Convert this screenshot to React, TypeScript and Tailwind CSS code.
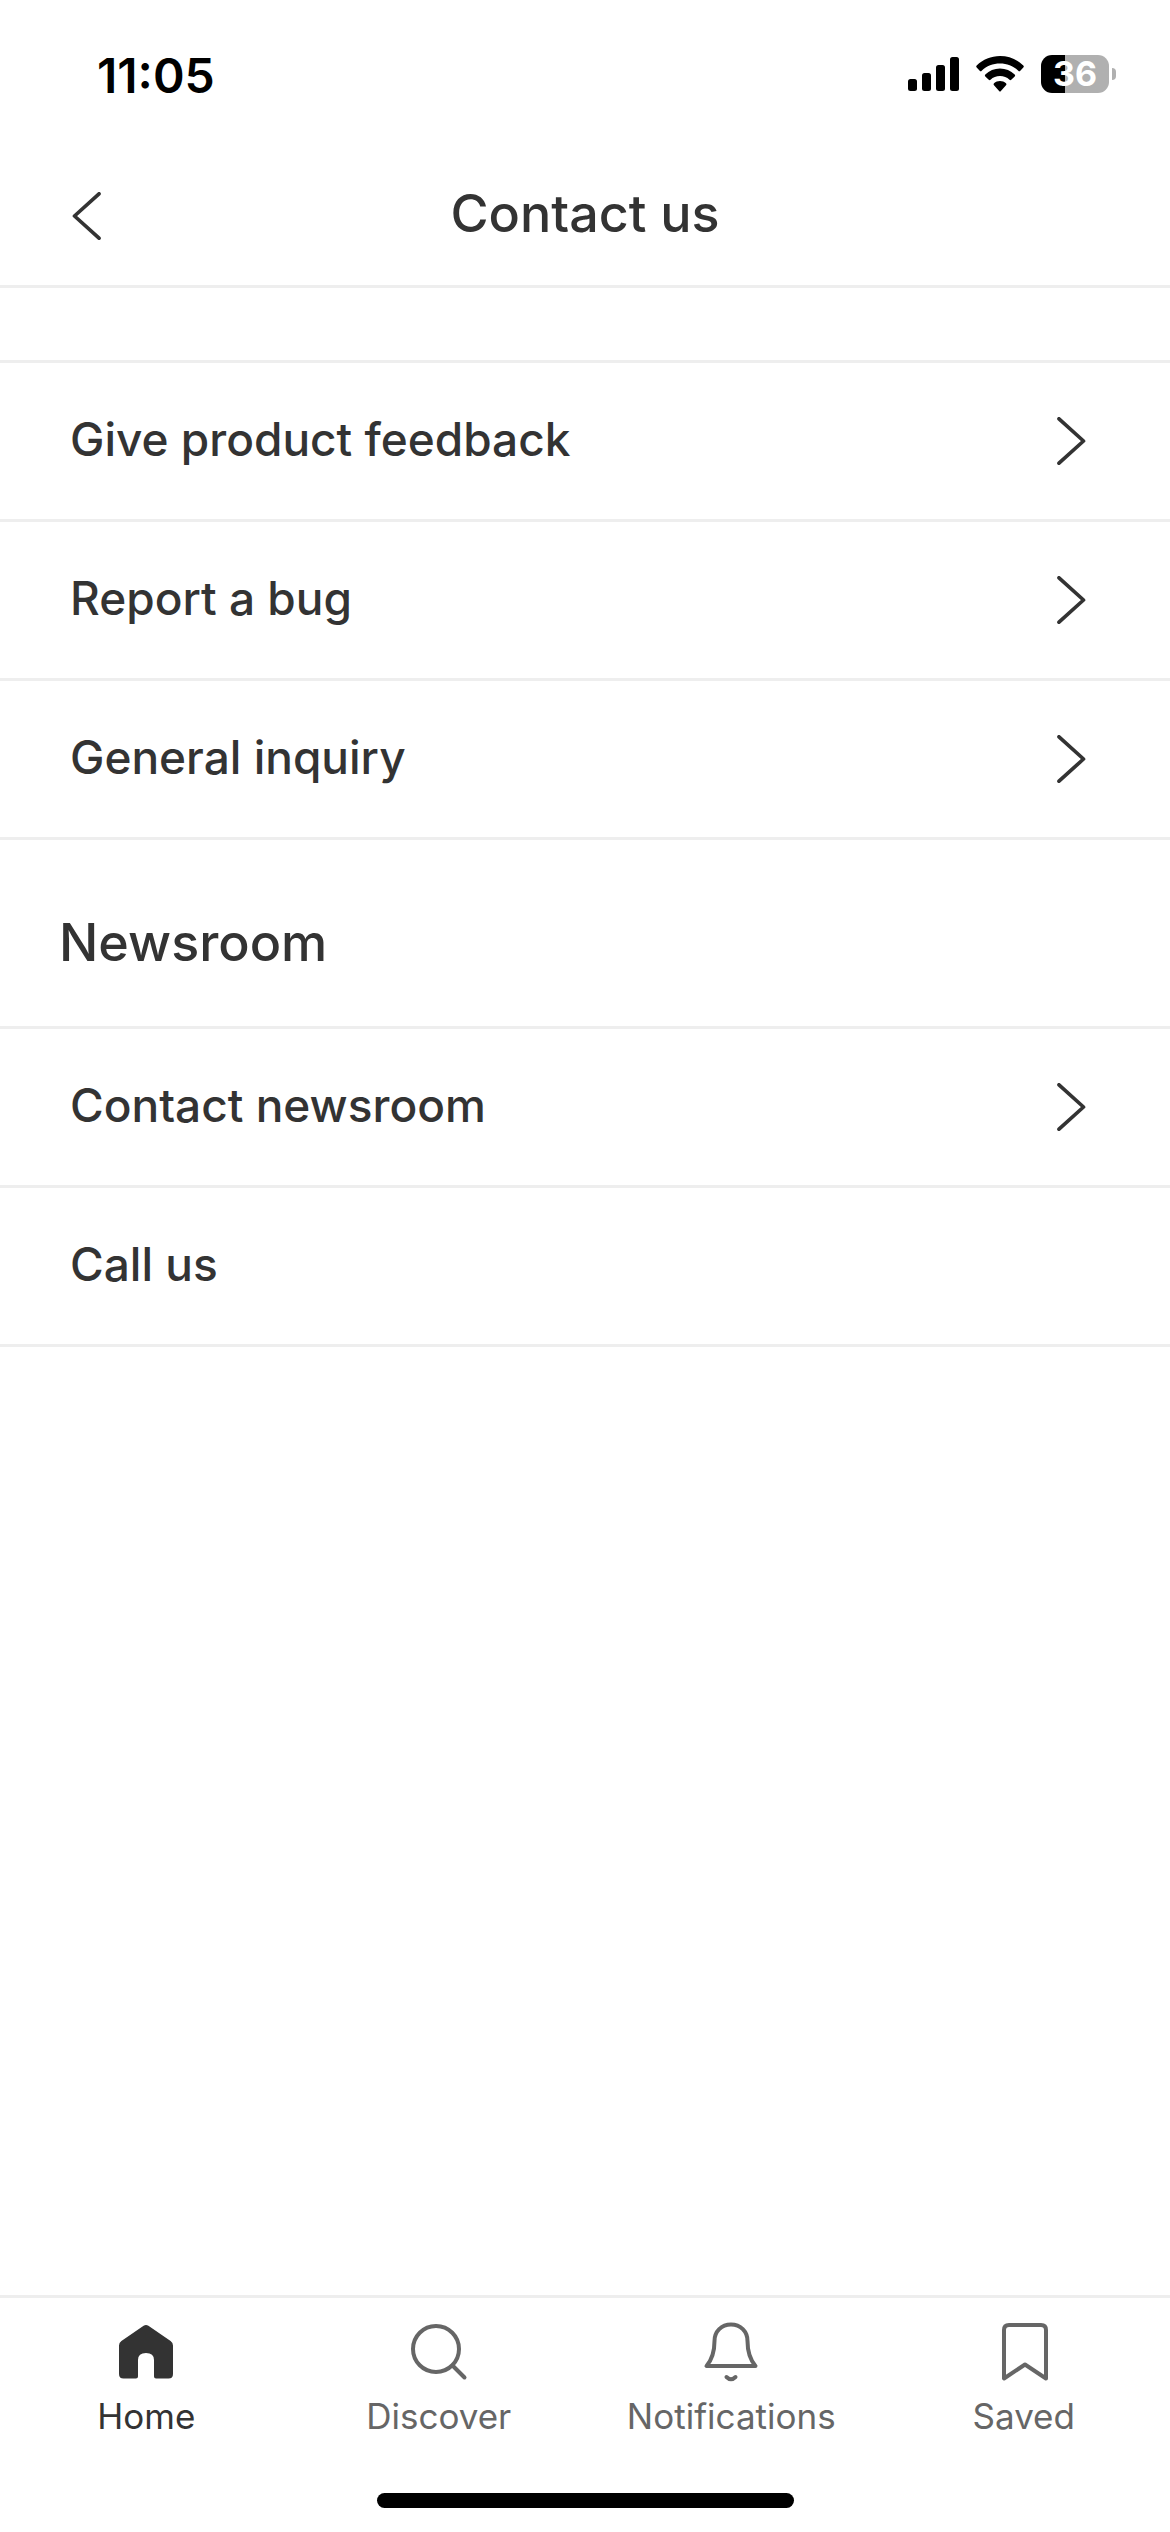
import React from 'react'
import clsx from 'clsx'

interface ContactItem {
  label: string
  hasChevron: boolean
}

interface TabItem {
  label: string
  icon: React.ReactNode
  active?: boolean
}

const supportItems: ContactItem[] = [
  { label: 'Give product feedback', hasChevron: true },
  { label: 'Report a bug', hasChevron: true },
  { label: 'General inquiry', hasChevron: true },
]

const newsroomItems: ContactItem[] = [
  { label: 'Contact newsroom', hasChevron: true },
  { label: 'Call us', hasChevron: false },
]

const tabs: TabItem[] = [
  {
    label: 'Home',
    active: true,
    icon: (
      <path
        d="M33.6 9.8Q36 8.2 38.4 9.8L60.6 25Q63 26.7 63 29.5V58Q63 62.5 58.5 62.5H46Q44 62.5 44 60.5V44Q44 37 36 37T28 44V60.5Q28 62.5 26 62.5H13.5Q9 62.5 9 58V29.5Q9 26.7 11.4 25Z"
        fill="currentColor"
        stroke="none"
      />
    ),
  },
  {
    label: 'Discover',
    icon: (
      <>
        <circle cx="33" cy="33" r="23" />
        <path d="M49.5 49.5L61.5 61.5" />
      </>
    ),
  },
  {
    label: 'Notifications',
    icon: (
      <>
        <path d="M36 8.5C26.5 8.5 19.5 15.5 19.5 25C19.5 36 17.5 43 11.5 50H60.5C54.5 43 52.5 36 52.5 25C52.5 15.5 45.5 8.5 36 8.5Z" />
        <path d="M31.5 61Q36 65.5 40.5 61" />
      </>
    ),
  },
  {
    label: 'Saved',
    icon: <path d="M16 62.5V14Q16 9 21 9H53Q58 9 58 14V62.5L37 48.5Z" />,
  },
]

function StatusBar() {
  return (
    <div className="flex h-[147px] items-center justify-between pr-[54px] pl-[97px] text-black">
      <span className="pt-1 text-[48px] leading-none font-semibold">11:05</span>
      <div className="flex items-center gap-[17px]">
        {/* Signal */}
        <svg className="h-[34px] w-[51px]" viewBox="0 0 51 34" fill="currentColor">
          <rect x="0" y="22" width="9" height="12" rx="2.5" />
          <rect x="14" y="16" width="9" height="18" rx="2.5" />
          <rect x="28" y="8" width="9" height="26" rx="2.5" />
          <rect x="42" y="0" width="9" height="34" rx="2.5" />
        </svg>
        {/* Wifi */}
        <svg className="h-9 w-12" viewBox="0 0 48 36" fill="currentColor">
          <path d="M24 0C33 0 41 3.4 47.3 9.5Q48.3 10.5 47.3 11.5L44.3 14.7Q43.3 15.7 42.3 14.7C37.3 10 31 7.5 24 7.5S10.7 10 5.7 14.7Q4.7 15.7 3.7 14.7L.7 11.5Q-.3 10.5 .7 9.5C7 3.4 15 0 24 0Z" />
          <path d="M24 12.5C29.7 12.5 34.7 14.7 38.7 18.4Q39.7 19.4 38.7 20.4L35.5 23.6Q34.5 24.6 33.5 23.7C30.9 21.3 27.7 20 24 20S17.1 21.3 14.5 23.7Q13.5 24.6 12.5 23.6L9.3 20.4Q8.3 19.4 9.3 18.4C13.3 14.7 18.3 12.5 24 12.5Z" />
          <path d="M24 25C26.3 25 28.3 25.8 30 27.3Q31 28.3 30 29.3L24.9 35Q24 36 23.1 35L18 29.3Q17 28.3 18 27.3C19.7 25.8 21.7 25 24 25Z" />
        </svg>
        {/* Battery */}
        <div className="flex items-center gap-[3px]">
          <div className="flex h-[38px] w-[68px] items-center justify-center rounded-[11px] bg-linear-to-r from-black from-35% to-[#b0b0b0] to-35% text-[34px] leading-none font-bold text-white">
            36
          </div>
          <div className="h-3 w-1 rounded-r-full bg-[#b0b0b0]" />
        </div>
      </div>
    </div>
  )
}

function Chevron({ direction }: { direction: 'left' | 'right' }) {
  return (
    <svg
      className={clsx('h-12 w-[29px] shrink-0', direction === 'left' && 'rotate-180')}
      viewBox="0 0 29 48"
      fill="none"
      stroke="currentColor"
      strokeWidth="3.7"
      strokeLinecap="round"
      strokeLinejoin="round"
    >
      <path d="M2 1.8L26.5 24L2 46.2" />
    </svg>
  )
}

function ContactList({ items }: { items: ContactItem[] }) {
  return (
    <ul className="border-t-3 border-[#eeeeee]">
      {items.map((item) => (
        <li key={item.label} className="border-b-3 border-[#eeeeee]">
          <a href="#" className="flex h-[156px] items-center justify-between pr-[84px] pl-[70px]">
            <span className="pb-1 text-[46px] leading-none font-medium">{item.label}</span>
            {item.hasChevron && <Chevron direction="right" />}
          </a>
        </li>
      ))}
    </ul>
  )
}

function TabBar() {
  return (
    <nav className="border-t-3 border-[#eeeeee]">
      <ul className="grid grid-cols-4 pt-[18px]">
        {tabs.map((tab) => (
          <li key={tab.label}>
            <a
              href="#"
              aria-current={tab.active ? 'page' : undefined}
              className={clsx(
                'flex flex-col items-center gap-2',
                tab.active ? 'text-[#333333]' : 'text-[#666666]'
              )}
            >
              <svg
                className="size-[72px]"
                viewBox="0 0 72 72"
                fill="none"
                stroke="currentColor"
                strokeWidth="4"
                strokeLinecap="round"
                strokeLinejoin="round"
              >
                {tab.icon}
              </svg>
              <span className="text-[35px] leading-10">{tab.label}</span>
            </a>
          </li>
        ))}
      </ul>
      {/* Home indicator */}
      <div className="mx-auto mt-[57px] mb-6 h-[15px] w-[417px] rounded-full bg-black" />
    </nav>
  )
}

export default function App() {
  return (
    <div className="flex min-h-screen flex-col bg-white font-['Inter',sans-serif] text-[#333333]">
      <StatusBar />

      {/* Header */}
      <header className="grid h-[141px] grid-cols-[1fr_auto_1fr] items-center border-b-3 border-[#eeeeee] px-[72px]">
        <button type="button" aria-label="Back" className="justify-self-start">
          <Chevron direction="left" />
        </button>
        <h1 className="pb-1 text-[52px] leading-none font-medium">Contact us</h1>
      </header>

      <main className="flex-1 pt-[72px]">
        <ContactList items={supportItems} />
        <section>
          <h2 className="flex h-[186px] items-center pt-5 pl-[59px] text-[52px] leading-none font-medium">Newsroom</h2>
          <ContactList items={newsroomItems} />
        </section>
      </main>

      <TabBar />
    </div>
  )
}
